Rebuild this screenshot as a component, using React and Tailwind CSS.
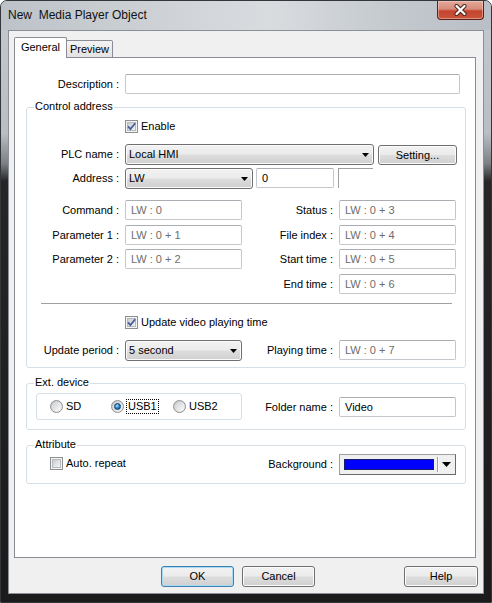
import React from 'react';

// Win7 style dialog: "New Media Player Object"

function Arrow({ big = false }) {
  return big ? (
    <svg width="9" height="5" viewBox="0 0 9 5" className="shrink-0">
      <path d="M0 0H9L4.5 5Z" fill="#000" />
    </svg>
  ) : (
    <svg width="7" height="4" viewBox="0 0 7 4" className="shrink-0">
      <path d="M0 0H7L3.5 4Z" fill="#000" />
    </svg>
  );
}

function CheckBox({ checked }) {
  return (
    <span className="relative w-[13px] h-[13px] shrink-0 border border-[#8e8f8f] bg-[#f4f4f4] p-[1px] flex">
      <span className="flex-1 border border-[#b4b9bf] bg-[linear-gradient(135deg,#c8ccd1,#f5f5f5)]" />
      {checked && (
        <svg width="13" height="13" viewBox="0 0 13 13" className="absolute -left-px -top-px">
          <path d="M3 6.4L5.4 9.1L10.2 3.3" fill="none" stroke="#4a5f99" strokeWidth="1.8" />
        </svg>
      )}
    </span>
  );
}

function Radio({ on }) {
  return (
    <span className="w-[13px] h-[13px] shrink-0 rounded-full border border-[#8e8f8f] bg-[linear-gradient(135deg,#c3c6ca,#f8f8f8)] flex items-center justify-center">
      {on ? (
        <span className="w-[7px] h-[7px] rounded-full border border-[#17426e] bg-[radial-gradient(circle_at_40%_35%,#a4e4ff_0%,#1d88cb_50%,#0b3c6c_100%)]" />
      ) : (
        <span className="w-[9px] h-[9px] rounded-full bg-[linear-gradient(135deg,#cdd0d4,#fafafa)]" />
      )}
    </span>
  );
}

function Combo({ className = '', text }) {
  return (
    <div className={`h-[21px] shrink-0 rounded-[3px] border border-[#707070] bg-[linear-gradient(to_bottom,#f2f2f2_0%,#ebebeb_48%,#dddddd_52%,#cfcfcf_100%)] shadow-[inset_0_0_0_1px_#fbfbfb] flex items-center pl-[3px] pr-[4px] ${className}`}>
      <span className="flex-1">{text}</span>
      <Arrow />
    </div>
  );
}

function Field({ className = '', text = '', dim = true }) {
  return (
    <div className={`h-[20px] shrink-0 rounded-[2px] border border-[#c3c6cb] border-t-[#abadb3] bg-white pl-[5px] flex items-center ${dim ? 'text-[#6d6d6d]' : 'text-black'} ${className}`}>
      {text}
    </div>
  );
}

function Btn({ className = '', children, def = false }) {
  return (
    <div className={`shrink-0 rounded-[3px] border ${def ? 'border-[#3c7fb1] shadow-[inset_0_0_0_1px_#a8dcf5]' : 'border-[#707070] shadow-[inset_0_0_0_1px_#fbfbfb]'} bg-[linear-gradient(to_bottom,#f2f2f2_0%,#ebebeb_48%,#dddddd_52%,#cfcfcf_100%)] flex items-center justify-center ${className}`}>
      {children}
    </div>
  );
}

function Group({ title, className = '', children }) {
  return (
    <div className={`relative ml-[11px] w-[440px] border border-[#d5dfe5] rounded-[3px] ${className}`}>
      <span className="absolute left-[7px] -top-[8px] bg-white px-[1px] leading-[13px]">{title}</span>
      {children}
    </div>
  );
}

function LeftLabel({ children }) {
  return <div className="w-[98px] shrink-0 pr-[6px] text-right">{children}</div>;
}

function RightLabel({ children }) {
  return <div className="w-[97px] shrink-0 pr-[6px] text-right">{children}</div>;
}

export default function App() {
  return (
    <div className="w-[492px] h-[603px] overflow-hidden rounded-t-[7px] border border-[#33373c] bg-[linear-gradient(to_bottom,#c4c9ce_0%,#b8bec4_22%,#7d8186_27%,#262626_30%,#1b1b1b_100%)] font-['Liberation_Sans',Arial,sans-serif] text-[11px] text-black">
      {/* title bar */}
      <div className="h-[29px] flex items-start bg-[linear-gradient(to_right,#bcc2c8_0%,#cdd1d5_30%,#d9dcdf_55%,#c4c9ce_80%,#b9bfc5_100%)]">
        <div className="flex-1 pl-[7px] pt-[7px] text-[12px] leading-[15px] text-[#111] whitespace-pre">New  Media Player Object</div>
        <div className="mr-[7px] w-[47px] h-[19px] rounded-b-[4px] border border-t-0 border-[#5a2219] bg-[linear-gradient(to_bottom,#e3a99b_0%,#d78b79_45%,#c5442e_55%,#c9553c_100%)] shadow-[inset_0_0_0_1px_rgba(255,220,210,0.45)] flex items-center justify-center">
          <svg width="15" height="12" viewBox="0 0 15 12">
            <path d="M3.5 2L11.5 10M11.5 2L3.5 10" stroke="#3d1d18" strokeWidth="4" strokeLinecap="round" />
            <path d="M3.5 2L11.5 10M11.5 2L3.5 10" stroke="#fff" strokeWidth="2.3" strokeLinecap="round" />
          </svg>
        </div>
      </div>

      {/* client area */}
      <div className="mx-[7px] h-[564px] bg-[#f0f0f0] border border-[#8b9096]">
        {/* tabs */}
        <div className="relative z-10 -mb-px flex items-end pl-[5px] pt-[6px]">
          <div className="h-[21px] w-[53px] bg-white border border-b-0 border-[#898c95] rounded-t-[2px] flex items-center justify-center pb-[1px]">General</div>
          <div className="h-[18px] w-[46px] border border-l-0 border-[#898c95] rounded-tr-[2px] bg-[linear-gradient(to_bottom,#f3f3f3,#e3e3e3)] flex items-center justify-center">Preview</div>
        </div>

        {/* tab page */}
        <div className="ml-[5px] w-[462px] h-[501px] bg-white border border-[#898c95]">
          <div className="mt-[16px] flex items-center">
            <div className="w-[110px] shrink-0 pr-[6px] text-right">Description :</div>
            <Field className="w-[335px]" />
          </div>

          <Group title="Control address" className="mt-[13px] h-[261px]">
            <div className="mt-[11px] h-[15px] pl-[98px] flex items-center">
              <CheckBox checked />
              <span className="ml-[3px]">Enable</span>
            </div>

            <div className="mt-[10px] flex items-start">
              <div className="h-[21px] flex items-center"><LeftLabel>PLC name :</LeftLabel></div>
              <Combo className="w-[249px]" text="Local HMI" />
              <Btn className="ml-[4px] mt-[1px] w-[79px] h-[20px]">Setting...</Btn>
            </div>

            <div className="mt-[3px] flex items-start">
              <div className="h-[21px] flex items-center"><LeftLabel>Address :</LeftLabel></div>
              <Combo className="w-[128px]" text="LW" />
              <Field className="ml-[3px] w-[78px]" text="0" dim={false} />
              <div className="ml-[4px] w-[35px] h-[20px] border-t border-l border-[#a0a0a0]" />
            </div>

            <div className="mt-[11px] flex items-center">
              <LeftLabel>Command :</LeftLabel>
              <Field className="w-[117px]" text="LW : 0" />
              <RightLabel>Status :</RightLabel>
              <Field className="w-[117px]" text="LW : 0 + 3" />
            </div>
            <div className="mt-[5px] flex items-center">
              <LeftLabel>Parameter 1 :</LeftLabel>
              <Field className="w-[117px]" text="LW : 0 + 1" />
              <RightLabel>File index :</RightLabel>
              <Field className="w-[117px]" text="LW : 0 + 4" />
            </div>
            <div className="mt-[4px] flex items-center">
              <LeftLabel>Parameter 2 :</LeftLabel>
              <Field className="w-[117px]" text="LW : 0 + 2" />
              <RightLabel>Start time :</RightLabel>
              <Field className="w-[117px]" text="LW : 0 + 5" />
            </div>
            <div className="mt-[5px] pl-[215px] flex items-center">
              <RightLabel>End time :</RightLabel>
              <Field className="w-[117px]" text="LW : 0 + 6" />
            </div>

            <div className="mt-[9px] ml-[14px] w-[411px] h-px bg-[#a0a0a0]" />

            <div className="mt-[11px] h-[15px] pl-[98px] flex items-center">
              <CheckBox checked />
              <span className="ml-[3px]">Update video playing time</span>
            </div>

            <div className="mt-[10px] flex items-start">
              <div className="h-[21px] flex items-center"><LeftLabel>Update period :</LeftLabel></div>
              <Combo className="w-[117px]" text="5 second" />
              <div className="h-[20px] flex items-center"><RightLabel>Playing time :</RightLabel></div>
              <Field className="w-[117px]" text="LW : 0 + 7" />
            </div>
          </Group>

          <Group title="Ext. device" className="mt-[15px] h-[47px] flex items-start">
            <div className="mt-[9px] ml-[9px] w-[206px] h-[27px] shrink-0 border border-[#d5dfe5] rounded-[3px] flex items-center pl-[13px]">
              <div className="w-[61px] flex items-center">
                <Radio />
                <span className="ml-[3px]">SD</span>
              </div>
              <div className="w-[62px] flex items-center">
                <Radio on />
                <span className="ml-[2px] border border-dotted border-black px-[1px] leading-[13px]">USB1</span>
              </div>
              <div className="flex items-center">
                <Radio />
                <span className="ml-[3px]">USB2</span>
              </div>
            </div>
            <div className="mt-[13px] flex items-center">
              <RightLabel>Folder name :</RightLabel>
              <Field className="w-[117px]" text="Video" dim={false} />
            </div>
          </Group>

          <Group title="Attribute" className="mt-[15px] h-[39px] flex items-start">
            <div className="w-[215px] shrink-0 mt-[10px] h-[15px] pl-[23px] flex items-center">
              <CheckBox />
              <span className="ml-[3px]">Auto. repeat</span>
            </div>
            <div className="mt-[8px] flex items-center">
              <RightLabel>Background :</RightLabel>
              <div className="w-[117px] h-[21px] shrink-0 border border-[#a0a0a0] border-r-[#696969] border-b-[#696969] bg-[#f0f0f0] flex items-center pl-[4px]">
                <div className="w-[90px] h-[11px] bg-[#0000ff] border border-[#1b1b6b]" />
                <div className="ml-[3px] w-px h-[15px] bg-[#a0a0a0] border-r border-white box-content" />
                <div className="flex-1 flex items-center justify-center pr-[1px]">
                  <Arrow big />
                </div>
              </div>
            </div>
          </Group>
        </div>

        {/* buttons */}
        <div className="mt-[8px] flex h-[21px]">
          <Btn def className="ml-[152px] w-[73px] h-[21px]">OK</Btn>
          <Btn className="ml-[8px] w-[73px] h-[21px]">Cancel</Btn>
          <Btn className="ml-[89px] w-[74px] h-[21px]">Help</Btn>
        </div>
      </div>
    </div>
  );
}
